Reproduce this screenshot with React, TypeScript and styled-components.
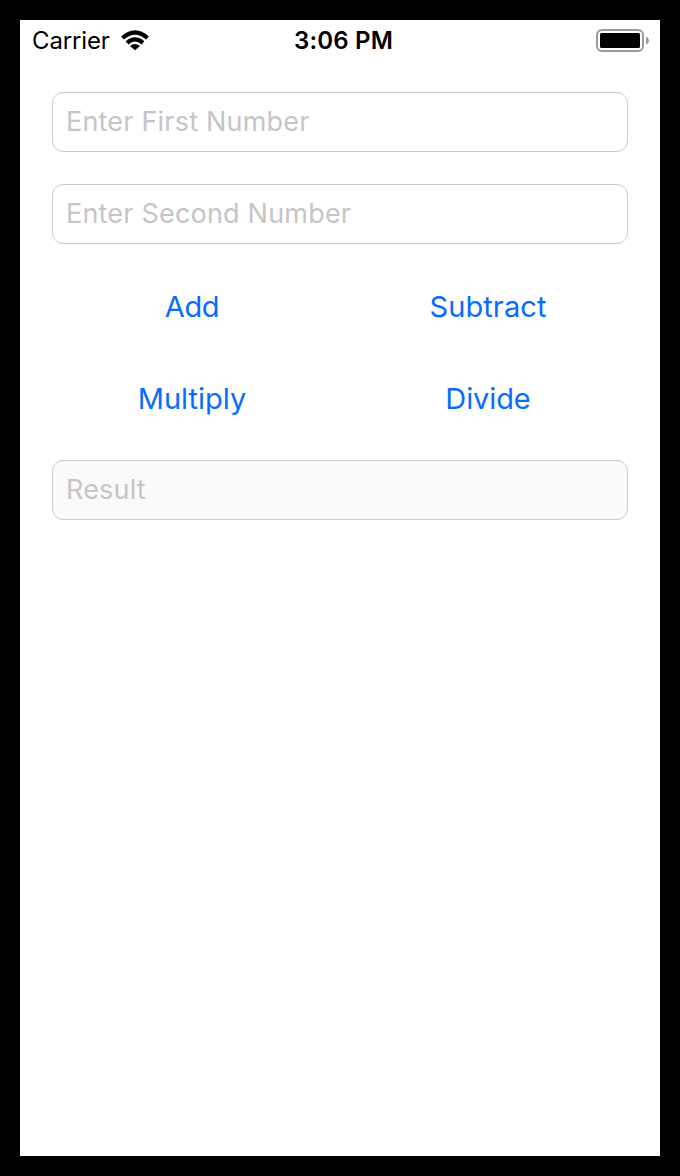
import React from 'react';
import styled, { createGlobalStyle } from 'styled-components';

const GlobalStyle = createGlobalStyle`
  * { box-sizing: border-box; }
  body { margin: 0; background: #000; }
`;

const Device = styled.div`
  width: 680px;
  height: 1176px;
  padding: 20px;
  background: #000;
  font-family: Inter, 'Liberation Sans', sans-serif;
`;

const Screen = styled.main`
  height: 100%;
  background: #fff;
`;

const StatusBar = styled.header`
  display: grid;
  grid-template-columns: 1fr auto 1fr;
  align-items: center;
  height: 40px;
  padding: 2px 10px 0 12px;
  color: #000;
`;

const Network = styled.div`
  display: flex;
  align-items: center;
  gap: 10px;
`;

const Carrier = styled.span`
  font-size: 24px;
  line-height: 30px;
  letter-spacing: -0.15px;
`;

const Time = styled.time`
  font-size: 24px;
  line-height: 30px;
  font-weight: 600;
  letter-spacing: 0.2px;
  padding-left: 5px;
`;

const BatteryIcon = styled.svg`
  justify-self: end;
`;

const Form = styled.form`
  display: flex;
  flex-direction: column;
  gap: 32px;
  padding: 32px;
`;

const Field = styled.input`
  width: 100%;
  height: 60px;
  padding: 0 13px 2px;
  border: 1px solid #cbcbcc;
  border-radius: 11px;
  background: #fff;
  font: 400 27px Inter, sans-serif;
  letter-spacing: 0.2px;
  outline: none;
  &::placeholder { color: #c5c5c8; opacity: 1; }
  &:disabled { background: #fafafa; }
`;

const Operations = styled.div`
  display: grid;
  grid-template-columns: 1fr 1fr;
  column-gap: 16px;
  row-gap: 32px;
`;

const Operation = styled.button<{ $spacing?: number }>`
  height: 60px;
  padding: 0;
  border: 0;
  background: transparent;
  color: #0a6cff;
  font: 400 29px Inter, sans-serif;
  letter-spacing: ${(p) => p.$spacing ?? 0}px;
`;

export default function App() {
  return (
    <>
      <GlobalStyle />
      <Device>
        <Screen>
          <StatusBar>
            <Network>
              <Carrier>Carrier</Carrier>
              <svg width="30" height="22" viewBox="0 0 30 22" fill="none" stroke="#000" strokeWidth="4.2">
                <path d="M2.500 8Q15 -3 27.500 8" />
                <path d="M7 12.900Q15 5.900 23 12.900" />
                <path d="M15 20.300L10 16Q15 12 20 16Z" fill="#000" stroke="none" />
              </svg>
            </Network>
            <Time>3:06 PM</Time>
            <BatteryIcon width="54" height="24" viewBox="0 0 54 24">
              <rect x="1" y="1" width="46" height="21" rx="5" fill="none" stroke="#999" strokeWidth="2" />
              <rect x="4" y="4" width="40" height="15" rx="1.500" />
              <path d="M50 7.500Q53 9 53 11.500T50 15.500Z" fill="#999" />
            </BatteryIcon>
          </StatusBar>
          <Form>
            <Field placeholder="Enter First Number" />
            <Field placeholder="Enter Second Number" />
            <Operations>
              <Operation type="button" $spacing={-0.4}>Add</Operation>
              <Operation type="button" $spacing={0.1}>Subtract</Operation>
              <Operation type="button">Multiply</Operation>
              <Operation type="button" $spacing={-0.1}>Divide</Operation>
            </Operations>
            <Field placeholder="Result" disabled />
          </Form>
        </Screen>
      </Device>
    </>
  );
}
